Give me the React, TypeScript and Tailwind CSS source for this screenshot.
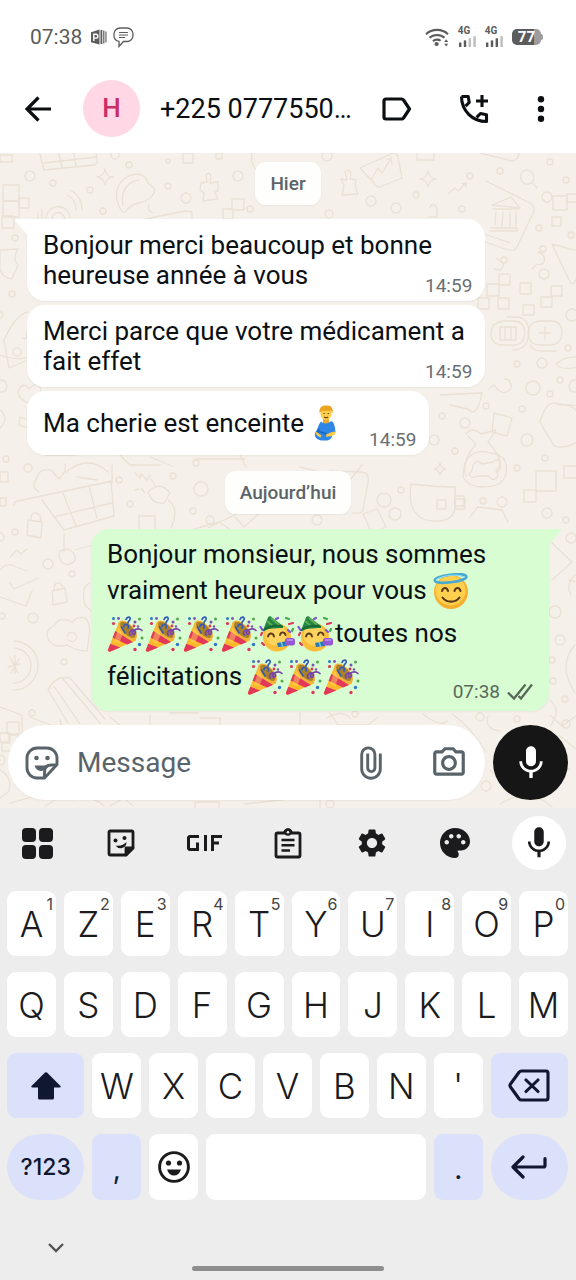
import React from "react";
import { MdSettings, MdPalette, MdMic, MdOutlinePhotoCamera } from "react-icons/md";

type IconProps = { className?: string };

/* ---------- status bar drawings ---------- */

function NewsIcon() {
  return (
    <svg className="h-4 w-[17px]" viewBox="0 0 17 16" aria-hidden="true">
      <path d="M1 3.2 9.5 0.5v15L1 13.2Z" fill="#5c5c5c" />
      <path d="M10.5 1h1.8v14h-1.8zM13.2 1.4h1.2v13.2h-1.2zM15.4 2.4h1.1v11.2h-1.1z" fill="#5c5c5c" />
      <path d="M3.8 12V5.2h2.1a1.9 1.9 0 0 1 0 3.9H3.8" fill="none" stroke="#fff" strokeWidth="1.4" />
    </svg>
  );
}

function BubbleIcon() {
  return (
    <svg className="h-[21px] w-[21px]" viewBox="0 0 21 21" fill="none" stroke="#5c5c5c" aria-hidden="true">
      <path d="M7 1h7a6 6 0 0 1 6 6v1.500a6 6 0 0 1-6 6h-3.500L6 19.500v-5.100A6 6 0 0 1 1 8.500V7a6 6 0 0 1 6-6Z" strokeWidth="1.3" />
      <path d="M6 5.500h9M6 8h9M6 10.500h6" strokeWidth="1.100" />
    </svg>
  );
}

function WifiIcon() {
  return (
    <svg className="h-[19px] w-6" viewBox="0 0 24 19" fill="none" stroke="#5c5c5c" strokeWidth="2.100" aria-hidden="true">
      <path d="M1 6.200C7 .400 17 .400 23 6.200M4.500 9.800c4-3.800 11-3.800 15 0M8 13.200c2-1.900 5.500-2.100 7.600-.400" />
      <circle cx="11.600" cy="16" r="2.100" fill="#5c5c5c" stroke="none" />
      <path d="m21.200 11.200 2 2.800h-4ZM21.200 18.600l2-2.800h-4Z" fill="#5c5c5c" stroke="none" />
    </svg>
  );
}

function Signal({ bars }: { bars: number }) {
  return (
    <span className="flex flex-col items-start gap-px">
      <span className="text-[10px] font-bold leading-[8px]">4G</span>
      <svg className="h-[11px] w-[18px]" viewBox="0 0 18 11" aria-hidden="true">
        {[0, 1, 2, 3].map((i) => (
          <rect key={i} x={1 + i * 4.800} y={6.500 - i * 2.100} width="2.400" height={4.500 + i * 2.100} fill={i < bars ? "#5c5c5c" : "#bdbdbd"} />
        ))}
      </svg>
    </span>
  );
}

function Battery() {
  return (
    <span className="flex items-center" aria-label="Batterie 77 %">
      <span className="rounded-[5px] bg-linear-to-r from-[#5c5c5c] from-77% to-[#9c9c9c] to-77% px-[6px] text-[15px] font-bold leading-4 text-white">
        77
      </span>
      <span className="h-[6px] w-[2px] rounded-r-sm bg-[#9c9c9c]" />
    </span>
  );
}

/* ---------- header drawings ---------- */

function BackIcon() {
  return (
    <svg className="h-[26px] w-[26px]" viewBox="0 0 26 26" fill="none" stroke="#0b0f12" strokeWidth="3.200" aria-hidden="true">
      <path d="M13.500 1.500 2 13l11.500 11.500M2.500 13H26" />
    </svg>
  );
}

function LabelIcon() {
  return (
    <svg className="h-6 w-[30px]" viewBox="0 0 30 24" fill="none" stroke="#0b0f12" strokeWidth="3.200" strokeLinejoin="round" aria-hidden="true">
      <path d="M4 2h15.500a2.400 2.400 0 0 1 2 1L27.500 12l-6 9a2.400 2.400 0 0 1-2 1H4a2 2 0 0 1-2-2V4a2 2 0 0 1 2-2Z" />
    </svg>
  );
}

function AddCallIcon() {
  return (
    <svg className="h-[30px] w-[30px]" viewBox="0 0 30 30" fill="none" stroke="#0b0f12" strokeWidth="3.100" aria-hidden="true">
      <path d="M2.500 2.500h6.700l1 6-3.700 3.700M2.500 2.500C2.500 16.600 13.400 27.500 27.500 27.500v-6.700l-6-1.300-3.900 3.900M23 1v12M17 7h12" strokeLinejoin="round" />
    </svg>
  );
}

function MoreIcon() {
  return (
    <svg className="h-[26px] w-2" viewBox="0 0 8 26" fill="#0b0f12" aria-hidden="true">
      <circle cx="4" cy="3.300" r="3.200" />
      <circle cx="4" cy="13" r="3.200" />
      <circle cx="4" cy="22.700" r="3.200" />
    </svg>
  );
}

/* ---------- emoji ---------- */

function Popper() {
  return (
    <svg className="h-9 w-[38px] shrink-0" viewBox="0 0 38 36" role="img" aria-label="🎉">
      <path d="M1 33.500 11.500 7 C16 3 31 17 29 24.500L3.500 35.600Q.300 36 1 33.500Z" fill="#fdb92c" />
      <path d="M8.300 15 26 26l-5.800 2.500L5.600 21.800ZM3.300 27.800l10 3.600-9.800 4.200Q.300 36 1 33.500Z" fill="#e2385c" />
      <path d="M13 8 7 25l5 2.500L17 15Z" fill="#ffdb62" opacity=".450" />
      <ellipse cx="20.600" cy="14.200" rx="12" ry="6.200" transform="rotate(47 20.600 14.200)" fill="#f3b13b" />
      <ellipse cx="20.900" cy="13.800" rx="10.200" ry="4.700" transform="rotate(47 20.900 13.800)" fill="#a8822b" />
      <g fill="none" strokeLinecap="round">
        <path d="M17 10.500c1-4 6-2 4 1.500M19 3.500c1-3 5-3.500 4 0-.500 1.500-2 1.500-2 3.500" stroke="#3158b8" strokeWidth="1.700" />
        <path d="m14.500 11 3.500 6" stroke="#375ba7" strokeWidth="1.700" />
        <path d="M23.500 19c-3-2 1-6.500 4-4.500s-1 5.500-2 3 5.500-7 9.500-3" stroke="#7a45a8" strokeWidth="1.700" />
      </g>
      <g fill="#7952b3"><circle cx="11.500" cy="2.500" r="1.400" /><circle cx="28" cy="6" r="1.500" /><circle cx="31" cy="10.500" r="1.200" /></g>
      <g fill="#dd365e"><circle cx="6.500" cy="7.500" r="1.600" /><circle cx="27" cy="10" r="1.400" /><circle cx="28" cy="33.500" r="1.700" /></g>
      <g fill="#2e78cb"><circle cx="6.500" cy="2.500" r="1.500" /><circle cx="32.500" cy="28.500" r="1.700" /></g>
      <g fill="#55a84c"><circle cx="32.500" cy="3" r="1.500" /><circle cx="35" cy="22" r="1.500" /></g>
    </svg>
  );
}

function PartyFace() {
  return (
    <svg className="h-9 w-[38px] shrink-0" viewBox="0 0 38 36" role="img" aria-label="🥳">
      <circle cx="18" cy="21.500" r="14" fill="#fcbd38" />
      <circle cx="17" cy="19" r="10.500" fill="#ffd35e" />
      <path d="M4 14.500 9 1.500c1-1.800 3-1.200 4 0l11 8.500c1.200 3-9 1-20 4.500Z" fill="#268343" />
      <path d="m8 5 7 6M12 2l8 7" stroke="#5bad51" strokeWidth="2" />
      <path d="M4 14.500c6-4.500 13-5.500 20-3.500" stroke="#136b36" strokeWidth="2.200" fill="none" />
      <path d="M9 20.500c1-4 5-4 6 0M21 19c1-3.500 4.500-3.500 5.500 0" stroke="#573a1e" strokeWidth="1.900" fill="none" strokeLinecap="round" />
      <path d="m18 27 10-2v5l-9 1Z" fill="#2878b9" />
      <path d="m22 26 2 5" stroke="#76c4dc" strokeWidth="1.600" />
      <rect x="26" y="22" width="10" height="7.500" rx="2.500" fill="#9458d4" />
      <path d="M28 24h6" stroke="#c493f2" strokeWidth="1.500" />
      <g strokeWidth="2.200" strokeLinecap="round">
        <path d="m1.500 11 2 3M17 3l2-1M29 14l2 2" stroke="#7c55d5" />
        <path d="m30 8 4-1M3 27l2 2M2 19l1-2" stroke="#df3658" />
        <path d="m27 2 3 1M34 13l-1 2" stroke="#48a850" />
      </g>
    </svg>
  );
}

function HaloFace() {
  return (
    <svg className="h-9 w-[38px] shrink-0" viewBox="0 0 38 36" role="img" aria-label="😇">
      <circle cx="19" cy="19" r="17" fill="#f6ae2d" />
      <circle cx="18.500" cy="17.500" r="15" fill="#ffd04e" />
      <ellipse cx="18.500" cy="5.500" rx="16" ry="3.800" transform="rotate(-7 18.500 5.500)" fill="none" stroke="#4aa9d2" strokeWidth="2.600" />
      <path d="M4 7c5-4 20-7 28-3" stroke="#8eddf0" strokeWidth="1.100" fill="none" />
      <path d="M10 18c1-4 5-4 6 0M22.500 18c1-4 5-4 6 0M10.500 24.500c4 5.500 13 5.500 17 0" fill="none" stroke="#573719" strokeWidth="2.100" strokeLinecap="round" />
    </svg>
  );
}

function PregnantPerson() {
  return (
    <svg className="h-9 w-6 shrink-0" viewBox="0 0 24 36" role="img" aria-label="🫃">
      <path d="M9 11h6v8H9Z" fill="#e9a82f" />
      <ellipse cx="12" cy="8.500" rx="5.600" ry="6.500" fill="#ffce4b" />
      <path d="M5.500 8c-.600-6 3-8 7-7.500 5-.500 7 3 6 8L17 5.500c-3 1-6 .500-9 .300Z" fill="#eba51f" />
      <path d="M9.200 8.500h1.600M13.500 8.500h1.600M10 12c1.500 1 3 1 4.200 0" stroke="#7e4c16" strokeWidth="1.100" />
      <path d="M7 16.500c4 3 7 2.500 10-.500 3 1 4 5 4.500 11l-3 2C18 34 15 36 10 35.500 2 35.500-1 31 2 26c2-2 2-6 5-9.500Z" fill="#2e86e6" />
      <path d="M2 28c3-2 9-1 12 3M6 24l-3 3" stroke="#1765bd" strokeWidth="1.300" fill="none" />
      <path d="M21.500 26.500c.500 3.500-3 4.500-9 5.500l-.500-2.500 6-2.500Z" fill="#ffc943" />
      <path d="M1.500 28c1 2 2 3 5 4.500l1-1.800-5-4Z" fill="#ffc943" />
    </svg>
  );
}

/* ---------- chat wallpaper ---------- */

const dots: number[][] = [
  [30, 176, 5], [53, 183, 3], [115, 155, 4], [129, 165, 3], [90, 190, 3], [103, 211, 3], [168, 186, 3], [186, 198, 5], [238, 176, 5],
  [168, 161, 2], [327, 156, 5], [371, 201, 5], [396, 208, 5], [416, 195, 3], [470, 176, 3], [500, 171, 3], [550, 162, 3], [547, 197, 5],
  [566, 180, 3], [329, 214, 4], [462, 209, 3], [15, 238, 3], [12, 294, 3], [17, 352, 4], [1, 386, 6], [6, 459, 3], [0, 315, 3],
  [544, 274, 5], [504, 260, 3], [543, 249, 3], [539, 228, 3], [571, 235, 3], [572, 315, 6], [568, 348, 3], [542, 363, 5], [517, 364, 3],
  [560, 380, 3], [533, 388, 7], [550, 394, 3], [575, 386, 6], [486, 406, 3], [442, 416, 3], [465, 423, 5], [522, 409, 3], [527, 440, 6],
  [434, 440, 5], [455, 451, 3], [545, 458, 3], [28, 468, 4], [119, 480, 3], [173, 476, 3], [201, 489, 7], [130, 504, 3], [193, 511, 3],
  [15, 532, 3], [48, 564, 5], [72, 574, 3], [0, 537, 4], [33, 618, 5], [2, 616, 3], [64, 662, 3], [32, 713, 3], [384, 500, 7],
  [401, 490, 3], [395, 514, 6], [317, 520, 5], [483, 501, 3], [502, 502, 5], [547, 513, 5], [566, 520, 3], [571, 538, 5], [555, 612, 6],
  [560, 640, 5], [552, 660, 3], [553, 681, 3], [565, 699, 3], [486, 786, 5], [517, 719, 3], [355, 714, 3], [0, 760, 5], [480, 717, 4],
  [517, 468, 3], [250, 209, 3], [566, 724, 4], [330, 804, 4], [196, 463, 3], [210, 520, 4],
];

const squares: number[][] = [
  [0, 155, 12, 7], [183, 153, 10, 10], [216, 153, 6, 6], [2, 216, 12, 12], [3, 185, 16, 16], [3, 201, 16, 16], [19, 198, 10, 10],
  [232, 199, 12, 11], [223, 209, 10, 10], [417, 150, 17, 10], [553, 196, 14, 14], [567, 194, 12, 8], [552, 217, 9, 9], [487, 284, 12, 12],
  [499, 274, 11, 11], [498, 298, 11, 11], [478, 298, 11, 11], [520, 283, 11, 11], [541, 297, 11, 10], [551, 286, 11, 10], [523, 305, 11, 10],
  [536, 471, 20, 20], [524, 490, 12, 12], [437, 500, 9, 9], [455, 499, 10, 10], [139, 516, 16, 14], [0, 472, 8, 10], [0, 498, 6, 8],
  [564, 466, 14, 12], [7, 722, 12, 12], [0, 733, 9, 9],
];

const doodles: string[] = [
  "M40 154l4 16 50-5q4-1 3-6l-1-6M44 163l52-6M59 154l3 14M74 154l2 12",
  "M105 169q1 8 8 8-7 1-8 8-1-7-8-8 7-1 8-8ZM428 171q1 7 8 8-7 1-8 8-1-7-8-8 7-1 8-8ZM440 463q1 6 6 6-5 1-6 6-1-5-6-6 5 0 6-6Z",
  "M117 200c-3-14 7-26 21-26q8 1 10 9l7 6q-1 10-16 14-8 1-14 9-4 2-8-12ZM123 205c-3-15 6-24 16-25",
  "M206 175q3-4 5 1l-1 7 8-1v9l-3 1 3 7-15 2 1-8-4-3 1-7 6-1ZM345 172q4-4 6 1l-1 6 6 1-1 6 3 8-16 1 2-9-3-7 6 1Z",
  "M46 222c-2-18 22-21 24-4M52 220c0-10 12-10 13 0M70 190q12 6 12 20M67 195q9 4 9 15M38 213v12M42 209v14",
  "M149 205q-2 6 4 8M145 219l40-8 7 1v14M252 153q-2 14 8 20",
  "M360 168l33-15q4-1 5 4l4 21-22 9q-5 0-7-5ZM371 180l7-12 4 5 8-13M386 160l5-2 1 6",
  "M480 153l32 8q6 0 7-8M448 194l7-6 3 3 7-7M462 184l4-1 0 4",
  "M486 181l44 22q5 3 4 8l-16 34q-3 7-10 5l-31-11M492 205l19-8 9 11ZM493 209l26 0M496 212l-1 13M503 212l-1 14M510 212v14M516 212v14M491 228h26v3h-27M484 234l26 9",
  "M526 170q8 1 8 9-2 6-9 5-6-4-4-10 1-3 5-4ZM533 183l4 5M538 252q8 2 6 10-3 4-7 2l-5 5M496 258l8 6-3 6-7-1",
  "M552 244l30 8v8q-7 30-12 22ZM0 250l18-1q-6 10 0 16l-6 14q-10-1-12-10ZM4 340q12-26 24-28M4 340l5 28 19-8",
  "M0 355q14 6 28 2M23 338q4 3 4-8M18 392q4-12 11-3 10-10 12 2 1 10-12 12-10-3-11-11ZM0 410q10 8 0 18M20 417l8 3-1 8-8-3Z",
  "M503 321h11q10 0 11 12-1 12-11 12h-11q-12 0-12-12 0-10 12-12ZM507 317h9q12 0 13 15-1 18-16 18M500 327h16v13h-16ZM505 327v13M511 327v13",
  "M539 321h12q11 0 11 12-1 12-12 12h-10q-11 0-12-12 1-11 11-12ZM539 333h12M545 327v12M530 345q4 7 14 6h12",
  "M556 364q8-8 24-7M556 364q4 7 24 3M504 379q8 0 7 9-6 8-13 2l-4-5-5 4",
  "M440 395l42-2q-5 26-14 16l-18-4M494 413l18 5-5 18-15-4ZM540 422q7-24 18-18l22 2v34q-15 10-26 6Z",
  "M466 434q6-8 15 0l15-4-8 12q18 20 10 30M468 436l8 8q-15 18-10 32",
  "M463 477c0-24 14-28 28-24q18 2 15 20-2 14-23 14-15 0-20-10ZM473 465q4-7 9-1l11-2q4-5 7 0 0 5-4 8l2 6q-5 7-9 0l-12 0q-5 4-8-2 4-3 4-9Z",
  "M39 492q-9-6-2-14 2-10 14-8l8 9q8-8 6-15M14 505q0-4 4-4l94-20M42 500l22 30 50-14-3-35M53 517l59-14M63 493l13 33M89 486l8 32M64 534v18M75 550l24-7M68 549q8 4 7 11-5 7-12 3-6-6-3-12ZM66 472q22-18 42 0M77 477l20 3M112 465v18",
  "M135 473l5 5 1-4 6 6M150 475l-2 4M135 490l4-1M148 492q12-12 22 1l-6 10q-12 2-16-11ZM145 493l-4-5M155 485l-4-6M168 500q12 8 3 28M208 528l30-15M194 529l25-7 12 8M235 517l9 10 17-15-8-3",
  "M28 520l14 2-1 16-14-3ZM31 520q0-8 5-7 5 1 5 8M52 591l13-3 2 14-14 3ZM54 590q0-8 5-7 4 2 4 5",
  "M10 557l7-7 4 4 6-5M0 570q7-8 14-4l13 5M10 583l4 6 24-11M32 591l-6 15-26-9M90 583q-10 4-5 22l6 6",
  "M50 642q-8-11 5-17 4-9 17-3 5-6 14-4 5 8 3 19l-2 14q-11 0-20-6-11 3-17-3ZM67 637q1-6 7-4l3 3M77 637q-2 7-9 3",
  "M14 641a24 24 0 1 1-1 49M14 648a17 17 0 1 1-1 35M8 667l12-3M10 657l8 16M15 655v18M11 673l8-14",
  "M48 690q7-15 22-12l35 41M48 690l20 33M54 686l26 38M63 679l37 44M0 707l22 8v24",
  "M411 484q25 3 44 3v22q-3 13-21 12-28-1-23-37ZM455 496h9v10h-9M330 471l32 1q8 2 6 10l-5 28q-2 4-10 3M363 514l14-5 9 18-14 6ZM470 517l8-10 24 3 6 12",
  "M549 540l23 22-20 18M575 575q-10 10-4 20M575 645q-18 20 0 48M569 580l8 2M550 700q12 10 1 25",
  "M10 735h8v8h8v8h-8v8h-8v-8h-8v-8h8ZM30 717l20 8M60 720l5 20M110 717l12 10M150 715v12M170 713h28M200 718h20v12M300 713v15M327 718q15-9 23 0M330 713l8 12h30l10-8",
  "M423 714q18 14 24 7M452 714q18 12 34 38M488 716q-4 13 12 15M545 748l25 22M560 736l16 13M550 715l12 11 14-10",
  "M0 770q14 8 8 22l-8 6M10 803l28-8M45 806l22-13M72 800q20-6 32 6M110 806l14-8 9 8M195 808v-6h24v6M245 804l45-5M320 808v-9h26M490 770l14 14M500 804q30-18 52 3",
  "M430 208q2-7 7 0v9h-8M300 467l50 13 12-15M560 405q8-2 16 5M45 455h30M150 457l22 9M240 455l6 12M195 459h50M120 455l10 10h30",
];

function Wallpaper() {
  return (
    <svg className="absolute inset-0 h-full w-full" viewBox="0 0 576 655" preserveAspectRatio="xMidYMin slice" aria-hidden="true">
      <g transform="translate(0 -153)" fill="none" stroke="#eae0d5" strokeWidth="1.300" strokeLinejoin="round" strokeLinecap="round">
        {dots.map(([x, y, r], i) => (
          <circle key={i} cx={x} cy={y} r={r} />
        ))}
        {squares.map(([x, y, w, h], i) => (
          <rect key={i} x={x} y={y} width={w} height={h} />
        ))}
        {doodles.map((d, i) => (
          <path key={i} d={d} />
        ))}
      </g>
    </svg>
  );
}

/* ---------- chat pieces ---------- */

function DayPill({ children }: { children: React.ReactNode }) {
  return (
    <div className="self-center rounded-[11px] bg-[#fefefd] px-[15px] text-[19px] font-medium leading-[43px] text-[#5c6468] shadow-xs">{children}</div>
  );
}

function Incoming({ children, tail = false }: { children: React.ReactNode; tail?: boolean }) {
  return (
    <div className={`relative flex items-end self-start bg-white pl-4 pr-[13px] shadow-xs ${tail ? "rounded-[18px] rounded-tl-none" : "rounded-[18px]"}`}>
      {tail && (
        <svg className="absolute -left-3 top-0 h-4 w-[13px]" viewBox="0 0 13 16" fill="#fff" aria-hidden="true">
          <path d="M2 0h11v16L.600 2.500C-.300 1.200.500 0 2 0Z" />
        </svg>
      )}
      {children}
    </div>
  );
}

function Time({ children }: { children: React.ReactNode }) {
  return <time className="pb-1 text-[19px] leading-[22px] text-[#6a6f72]">{children}</time>;
}

function DoubleCheck() {
  return (
    <svg className="h-[18px] w-[26px]" viewBox="0 0 26 18" fill="none" stroke="#58695b" strokeWidth="2.300" aria-hidden="true">
      <path d="m1 9.500 6 6L18.500 1.500M11.500 13l2.500 2.500L25 1.500" />
    </svg>
  );
}

function StickerIcon() {
  return (
    <svg className="h-[34px] w-[34px]" viewBox="0 0 34 34" fill="none" stroke="#59636a" strokeWidth="2.900" strokeLinejoin="round" aria-hidden="true">
      <path d="M12 2h10a10 10 0 0 1 10 10v6.500L19.500 32H12A10 10 0 0 1 2 22V12A10 10 0 0 1 12 2Z" />
      <path d="M19.500 31v-5q0-7 7-7H32" />
      <circle cx="11.500" cy="12" r="2.300" fill="#59636a" stroke="none" />
      <circle cx="22.500" cy="12" r="2.300" fill="#59636a" stroke="none" />
      <path d="M9.500 19.500h12.500q-2.500 5.500-6.300 5.500-4.500-.500-6.200-5.500Z" fill="#59636a" stroke="none" />
    </svg>
  );
}

function ClipIcon() {
  return (
    <svg className="h-[34px] w-[22px]" viewBox="0 0 22 34" fill="none" stroke="#59636a" strokeWidth="2.900" aria-hidden="true">
      <path d="M20.300 7.500V23a9.300 9.300 0 0 1-18.600 0V8.500a6.600 6.600 0 0 1 13.200 0V22a3.600 3.600 0 0 1-7.200 0V7.500" />
    </svg>
  );
}

/* ---------- keyboard drawings ---------- */

function GridIcon() {
  return (
    <svg className="h-[31px] w-[31px]" viewBox="0 0 31 31" fill="#1b1b1d" aria-hidden="true">
      <rect width="14" height="14" rx="4" />
      <rect x="17" width="14" height="14" rx="4" />
      <rect y="17" width="14" height="14" rx="4" />
      <rect x="17" y="17" width="14" height="14" rx="4" />
    </svg>
  );
}

function KbStickerIcon() {
  return (
    <svg className="h-7 w-7" viewBox="0 0 28 28" fill="none" stroke="#1b1b1d" strokeWidth="2.800" strokeLinejoin="round" aria-hidden="true">
      <path d="M3.500 2h21A1.500 1.500 0 0 1 26 3.500V19l-7 7H3.500A1.500 1.500 0 0 1 2 24.500v-21A1.500 1.500 0 0 1 3.500 2Z" />
      <path d="M19 26v-7h7Z" fill="#1b1b1d" />
      <circle cx="8.500" cy="11.500" r="2" fill="#1b1b1d" stroke="none" />
      <circle cx="17.500" cy="9" r="2" fill="#1b1b1d" stroke="none" />
      <path d="M8.500 16.500q7 1 11-3.500 0 5-4.500 6-4 1-6.500-2.500Z" fill="#1b1b1d" stroke="none" />
    </svg>
  );
}

function GifIcon() {
  return (
    <svg className="h-4 w-[35px]" viewBox="0 0 35 16" fill="none" stroke="#1b1b1d" strokeWidth="3" aria-hidden="true">
      <rect x="17" y="0" width="3" height="16" fill="#1b1b1d" stroke="none" />
      <polyline points="12,1.500 2.500,1.500 1.500,2.500 1.500,13.500 2.500,14.500 10.500,14.500 10.500,7.500" />
      <polyline points="35,1.500 25.500,1.500 25.500,16" />
      <line x1="25" y1="8" x2="32" y2="8" />
    </svg>
  );
}

function ClipboardIcon() {
  return (
    <svg className="h-[31px] w-7" viewBox="0 0 28 31" fill="none" stroke="#1b1b1d" strokeWidth="2.800" strokeLinejoin="round" aria-hidden="true">
      <path d="M3.500 5h21A1.500 1.500 0 0 1 26 6.500v21a1.500 1.500 0 0 1-1.500 1.500h-21A1.500 1.500 0 0 1 2 27.500v-21A1.500 1.500 0 0 1 3.500 5Z" />
      <path d="M9 5.500a5 5 0 0 1 10 0Z" fill="#1b1b1d" stroke="none" />
      <circle cx="14" cy="4" r="3.700" fill="#1b1b1d" stroke="none" />
      <circle cx="14" cy="4.300" r="1.300" fill="#ededed" stroke="none" />
      <path d="M7.500 12h13M7.500 17.300h13M7.500 22.600h8.500" strokeWidth="2.500" />
    </svg>
  );
}

function ShiftIcon() {
  return (
    <svg className="h-7 w-[30px]" viewBox="0 0 30 28" fill="#101730" aria-hidden="true">
      <path d="M14 .600q1-.900 2 0L29.500 14q.800 1.400-1 1.500H23V26q0 1.500-1.500 1.500h-13Q7 27.500 7 26V15.500H1.500q-1.800-.100-1-1.500Z" />
    </svg>
  );
}

function BackspaceIcon() {
  return (
    <svg className="h-[33px] w-[42px]" viewBox="0 0 42 33" fill="none" stroke="#101730" strokeWidth="3.100" strokeLinejoin="round" strokeLinecap="round" aria-hidden="true">
      <path d="M13.500 2H38a2 2 0 0 1 2 2v25a2 2 0 0 1-2 2H13.500a3 3 0 0 1-2.300-1L2.500 18a2.500 2.500 0 0 1 0-3l8.700-12a3 3 0 0 1 2.300-1ZM18 11l12 11.500M30 11 18 22.500" />
    </svg>
  );
}

function EnterIcon() {
  return (
    <svg className="h-6 w-9" viewBox="0 0 36 24" fill="none" stroke="#101730" strokeWidth="3.200" strokeLinejoin="round" strokeLinecap="round" aria-hidden="true">
      <path d="M12 2 2 12l10 10M2.500 12H32.500q1.500 0 1.500-1.500V3.500" />
    </svg>
  );
}

function SmileIcon() {
  return (
    <svg className="h-8 w-8" viewBox="0 0 32 32" fill="#1b1b1d" aria-hidden="true">
      <circle cx="16" cy="16" r="14.400" fill="none" stroke="#1b1b1d" strokeWidth="2.900" />
      <circle cx="10.500" cy="12" r="2.600" />
      <circle cx="21.500" cy="12" r="2.600" />
      <path d="M9 18.500h14q-2 6-7 6t-7-6Z" />
    </svg>
  );
}

const topRow = ["A", "Z", "E", "R", "T", "Y", "U", "I", "O", "P"];
const midRow = ["Q", "S", "D", "F", "G", "H", "J", "K", "L", "M"];
const lowRow = ["W", "X", "C", "V", "B", "N", "'"];

function Key({ label, hint }: { label: string; hint?: string }) {
  return (
    <button type="button" className="relative col-span-2 flex h-[65px] items-center justify-center rounded-[9px] bg-white pt-[2px] text-[35px] font-[360] leading-none text-[#1b1b1d]">
      {label}
      {hint && <span className="absolute right-[3px] top-[5px] text-base font-normal leading-4 text-[#444]">{hint}</span>}
    </button>
  );
}

function Tool({ label, children, className = "" }: { label: string; children: React.ReactNode } & IconProps) {
  return (
    <button type="button" aria-label={label} className={`flex size-[54px] items-center justify-center rounded-full text-[#1b1b1d] ${className}`}>
      {children}
    </button>
  );
}

export default function App() {
  return (
    <div className="flex min-h-screen flex-col bg-[#ededed] font-[Roboto,sans-serif]">
      <header className="bg-white">
        <div className="flex h-[66px] items-center pl-[30px] pr-[33px] pt-2 text-[#5c5c5c]">
          <time className="text-[21px] leading-6">07:38</time>
          <div className="flex flex-1 items-center gap-[6px] pl-2">
            <NewsIcon />
            <BubbleIcon />
          </div>
          <div className="flex items-center gap-[9px]">
            <WifiIcon />
            <Signal bars={2} />
            <Signal bars={3} />
            <Battery />
          </div>
        </div>
        <div className="flex h-[87px] items-center pb-[2px] pl-[25px] pr-[31px]">
          <button type="button" aria-label="Retour"><BackIcon /></button>
          <div className="ml-8 flex size-[57px] shrink-0 items-center justify-center rounded-full bg-[#ffd7e5] text-[26px] font-medium text-[#cb2c66]">H</div>
          <h1 className="min-w-0 flex-1 truncate pl-5 text-[27px] leading-8 text-[#0b0f12]">+225 0777550…</h1>
          <div className="flex shrink-0 items-center">
            <button type="button" aria-label="Libellé"><LabelIcon /></button>
            <button type="button" aria-label="Ajouter un appel" className="ml-[47px]"><AddCallIcon /></button>
            <button type="button" aria-label="Plus d’options" className="ml-12"><MoreIcon /></button>
          </div>
        </div>
      </header>

      <main className="relative bg-[#f5f1ea]">
        <Wallpaper />
        <div className="relative flex flex-col px-[27px] pb-[7px] pt-[9px]">
          <DayPill>Hier</DayPill>
          <div className="mb-4 mt-[14px] flex flex-col gap-1">
            <Incoming tail>
              <p className="w-[382px] whitespace-nowrap pb-[11px] pt-[11px] text-[26px] leading-[30px] text-[#0b1014]">
                Bonjour merci beaucoup et bonne<br />heureuse année à vous
              </p>
              <Time>14:59</Time>
            </Incoming>
            <Incoming>
              <p className="w-[382px] whitespace-nowrap pb-[11px] pt-[11px] text-[26px] leading-[30px] text-[#0b1014]">
                Merci parce que votre médicament a<br />fait effet
              </p>
              <Time>14:59</Time>
            </Incoming>
            <Incoming>
              <p className="flex h-16 items-center gap-[10px] pr-[31px] text-[26px] leading-[30px] text-[#0b1014]">
                Ma cherie est enceinte
                <PregnantPerson />
              </p>
              <Time>14:59</Time>
            </Incoming>
          </div>
          <DayPill>Aujourd’hui</DayPill>
          <div className="relative mt-[15px] w-[458px] self-end rounded-[18px] rounded-tr-none bg-[#d8fdd2] px-4 pb-[13px] pt-[10px] text-[26px] text-[#0b1014] shadow-xs">
            <svg className="absolute -right-3 top-0 h-4 w-[13px]" viewBox="0 0 13 16" fill="#d8fdd2" aria-hidden="true">
              <path d="M11 0H0v16L12.400 2.500C13.300 1.200 12.500 0 11 0Z" />
            </svg>
            <p className="leading-[30px]">Bonjour monsieur, nous sommes</p>
            <p className="flex h-[43px] items-center gap-[5px]">vraiment heureux pour vous <HaloFace /></p>
            <p className="flex h-[43px] items-center">
              <Popper /><Popper /><Popper /><Popper /><PartyFace /><PartyFace />toutes nos
            </p>
            <div className="flex h-[43px] justify-between">
              <p className="flex items-center gap-[5px]">félicitations <span className="flex"><Popper /><Popper /><Popper /></span></p>
              <span className="-mb-1 flex items-center gap-[7px] self-end text-[19px] leading-5 text-[#58695b]"><time>07:38</time><DoubleCheck /></span>
            </div>
          </div>
        </div>
        <div className="relative flex items-center gap-2 px-2 pb-2 pt-[7px]">
          <div className="flex h-[75px] min-w-0 flex-1 items-center rounded-full bg-white pl-[17px] pr-[17px] shadow-xs">
            <button type="button" aria-label="Emojis et stickers"><StickerIcon /></button>
            <input aria-label="Message" placeholder="Message" className="ml-[18px] min-w-0 flex-1 bg-transparent text-[28px] leading-9 outline-none placeholder:text-[#59636a]" />
            <button type="button" aria-label="Joindre"><ClipIcon /></button>
            <button type="button" aria-label="Appareil photo" className="ml-12"><MdOutlinePhotoCamera className="size-[38px] text-[#59636a]" /></button>
          </div>
          <button type="button" aria-label="Message vocal" className="flex size-[75px] shrink-0 items-center justify-center rounded-full bg-[#161616]">
            <MdMic className="size-10 text-white" />
          </button>
        </div>
      </main>

      <section aria-label="Clavier" className="flex flex-1 flex-col font-[Inter,sans-serif]">
        <div className="flex items-center justify-between px-[10px] pt-2">
          <Tool label="Menu"><GridIcon /></Tool>
          <Tool label="Stickers"><KbStickerIcon /></Tool>
          <Tool label="GIF"><GifIcon /></Tool>
          <Tool label="Presse-papiers"><ClipboardIcon /></Tool>
          <Tool label="Paramètres"><MdSettings className="size-[34px]" /></Tool>
          <Tool label="Thème"><MdPalette className="size-9" /></Tool>
          <Tool label="Saisie vocale" className="bg-white"><MdMic className="size-[38px]" /></Tool>
        </div>
        <div className="grid grid-cols-20 gap-x-2 gap-y-4 pl-[7px] pr-2 pt-[21px]">
          {topRow.map((k, i) => (
            <Key key={k} label={k} hint={String((i + 1) % 10)} />
          ))}
          {midRow.map((k) => (
            <Key key={k} label={k} />
          ))}
          <button type="button" aria-label="Majuscule" className="col-span-3 flex h-[65px] items-center justify-center rounded-[9px] bg-[#dbe1fa]"><ShiftIcon /></button>
          {lowRow.map((k) => (
            <Key key={k} label={k} />
          ))}
          <button type="button" aria-label="Effacer" className="col-span-3 flex h-[65px] items-center justify-center rounded-[9px] bg-[#dbe1fa]"><BackspaceIcon /></button>
          <button type="button" className="col-span-3 h-[66px] rounded-[33px] bg-[#dbe1fa] text-[23px] font-medium text-[#101730]">?123</button>
          <button type="button" className="col-span-2 h-[66px] rounded-[9px] bg-[#dbe1fa] pt-1 text-[28px] text-[#101730]">,</button>
          <button type="button" aria-label="Emojis" className="col-span-2 flex h-[66px] items-center justify-center rounded-[9px] bg-white"><SmileIcon /></button>
          <button type="button" aria-label="Espace" className="col-span-8 h-[66px] rounded-[9px] bg-white" />
          <button type="button" className="col-span-2 h-[66px] rounded-[9px] bg-[#dbe1fa] pt-1 text-[28px] text-[#101730]">.</button>
          <button type="button" aria-label="Entrée" className="col-span-3 flex h-[66px] items-center justify-center rounded-[33px] bg-[#dbe1fa]"><EnterIcon /></button>
        </div>
        <div className="mt-auto flex flex-col pb-[9px]">
          <button type="button" aria-label="Masquer le clavier" className="ml-12 self-start">
            <svg className="h-[10px] w-4" viewBox="0 0 16 10" fill="none" stroke="#555" strokeWidth="2.400" aria-hidden="true">
              <path d="m1 1 7 7 7-7" />
            </svg>
          </button>
          <div className="mt-[13px] h-[5px] w-1/3 self-center rounded-full bg-[#8e8e8e]" />
        </div>
      </section>
    </div>
  );
}
